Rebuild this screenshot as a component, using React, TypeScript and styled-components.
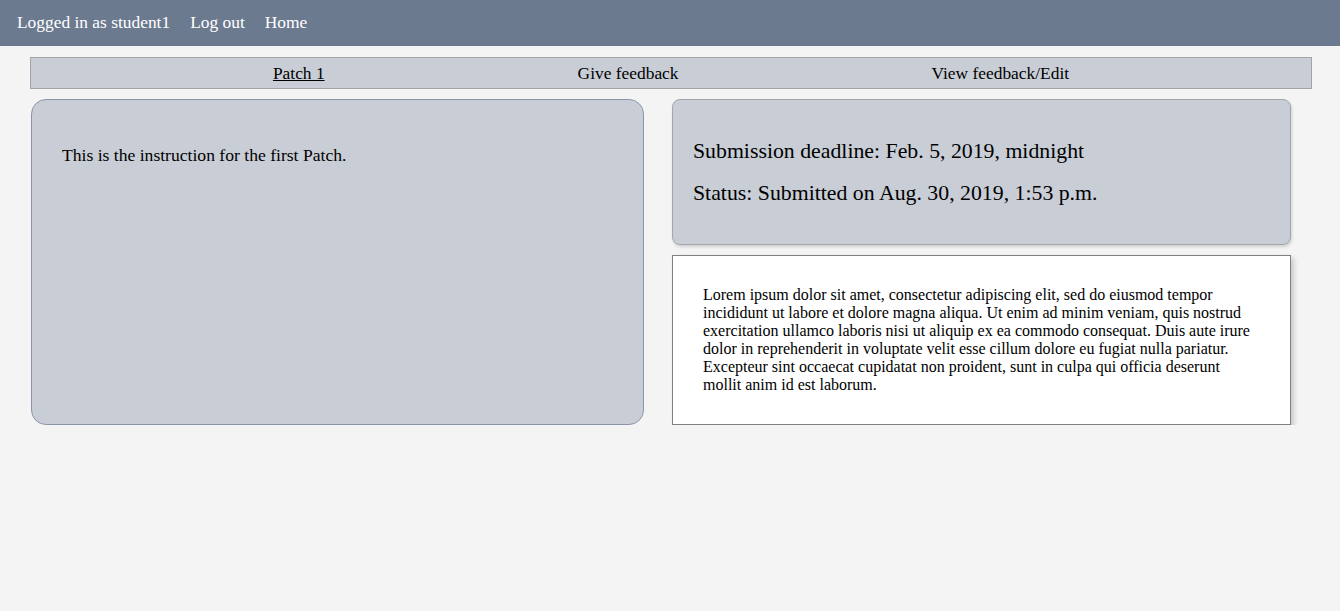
import styled, { createGlobalStyle } from "styled-components";

const GlobalStyle = createGlobalStyle`
  body {
    margin: 0;
    background-color: #f4f4f4;
    font-family: Georgia, "Liberation Serif", serif;
    color: #000;
  }
`;

const lorem =
  "Lorem ipsum dolor sit amet, consectetur adipiscing elit, sed do eiusmod tempor incididunt ut labore et dolore magna aliqua. Ut enim ad minim veniam, quis nostrud exercitation ullamco laboris nisi ut aliquip ex ea commodo consequat. Duis aute irure dolor in reprehenderit in voluptate velit esse cillum dolore eu fugiat nulla pariatur. Excepteur sint occaecat cupidatat non proident, sunt in culpa qui officia deserunt mollit anim id est laborum.";

export default function App() {
  return (
    <>
      <GlobalStyle />
      <TopBar>
        <TopLink>Logged in as student1</TopLink>
        <TopLink>Log out</TopLink>
        <TopLink>Home</TopLink>
      </TopBar>
      <Main>
        <TabBar>
          <Tab $active>Patch 1</Tab>
          <Tab>Give feedback</Tab>
          <Tab>View feedback/Edit</Tab>
        </TabBar>
        <Columns>
          <InstructionCard>
            <p>This is the instruction for the first Patch.</p>
          </InstructionCard>
          <SideColumn>
            <StatusCard>
              <StatusLine>Submission deadline: Feb. 5, 2019, midnight</StatusLine>
              <StatusLine>Status: Submitted on Aug. 30, 2019, 1:53 p.m.</StatusLine>
            </StatusCard>
            <TextCard>{lorem}</TextCard>
          </SideColumn>
        </Columns>
      </Main>
    </>
  );
}

const TopBar = styled.header`
  display: flex;
  align-items: center;
  gap: 20px;
  height: 46px;
  padding: 0 17px;
  background-color: #6b7a8f;
`;

const TopLink = styled.a`
  color: #fff;
  font-size: 17.4px;
  cursor: pointer;
  margin-top: -1px;
`;

const Main = styled.main`
  padding: 11px 28px 0 30px;
`;

const TabBar = styled.nav`
  display: flex;
  justify-content: center;
  align-items: center;
  gap: 253px;
  height: 30px;
  background-color: #c9ced6;
  border: 1px solid #a0a4a9;
`;

const Tab = styled.a<{ $active?: boolean }>`
  font-size: 17.4px;
  color: #000;
  cursor: pointer;
  margin-top: 1px;
  text-decoration: ${(p) => (p.$active ? "underline" : "none")};
`;

const Columns = styled.div`
  display: flex;
  align-items: flex-start;
  gap: 28px;
  margin-top: 10px;
  padding-left: 1px;
`;

const InstructionCard = styled.section`
  box-sizing: border-box;
  width: 613px;
  height: 326px;
  padding: 30px;
  background-color: #c9ced6;
  border: 1px solid #8a96a8;
  border-radius: 15px;
  font-size: 17.6px;

  p {
    margin: 16px 0;
    line-height: 19px;
  }
`;

const SideColumn = styled.div`
  display: flex;
  flex-direction: column;
  gap: 10px;
  width: 619px;
`;

const StatusCard = styled.section`
  box-sizing: border-box;
  height: 146px;
  padding: 20px;
  background-color: #c9ced6;
  border: 1px solid #a3a7ac;
  border-radius: 8px;
  box-shadow: 1px 2px 3px rgba(0, 0, 0, 0.15);
`;

const StatusLine = styled.p`
  margin: 20px 0;
  font-size: 21.8px;
  line-height: 22px;
`;

const TextCard = styled.section`
  box-sizing: border-box;
  height: 170px;
  padding: 30px;
  background-color: #fff;
  border: 1px solid #808080;
  box-shadow: 3px 3px 5px rgba(0, 0, 0, 0.18);
  font-family: "Times New Roman", "Liberation Serif", serif;
  font-size: 16px;
  line-height: 18px;
`;
